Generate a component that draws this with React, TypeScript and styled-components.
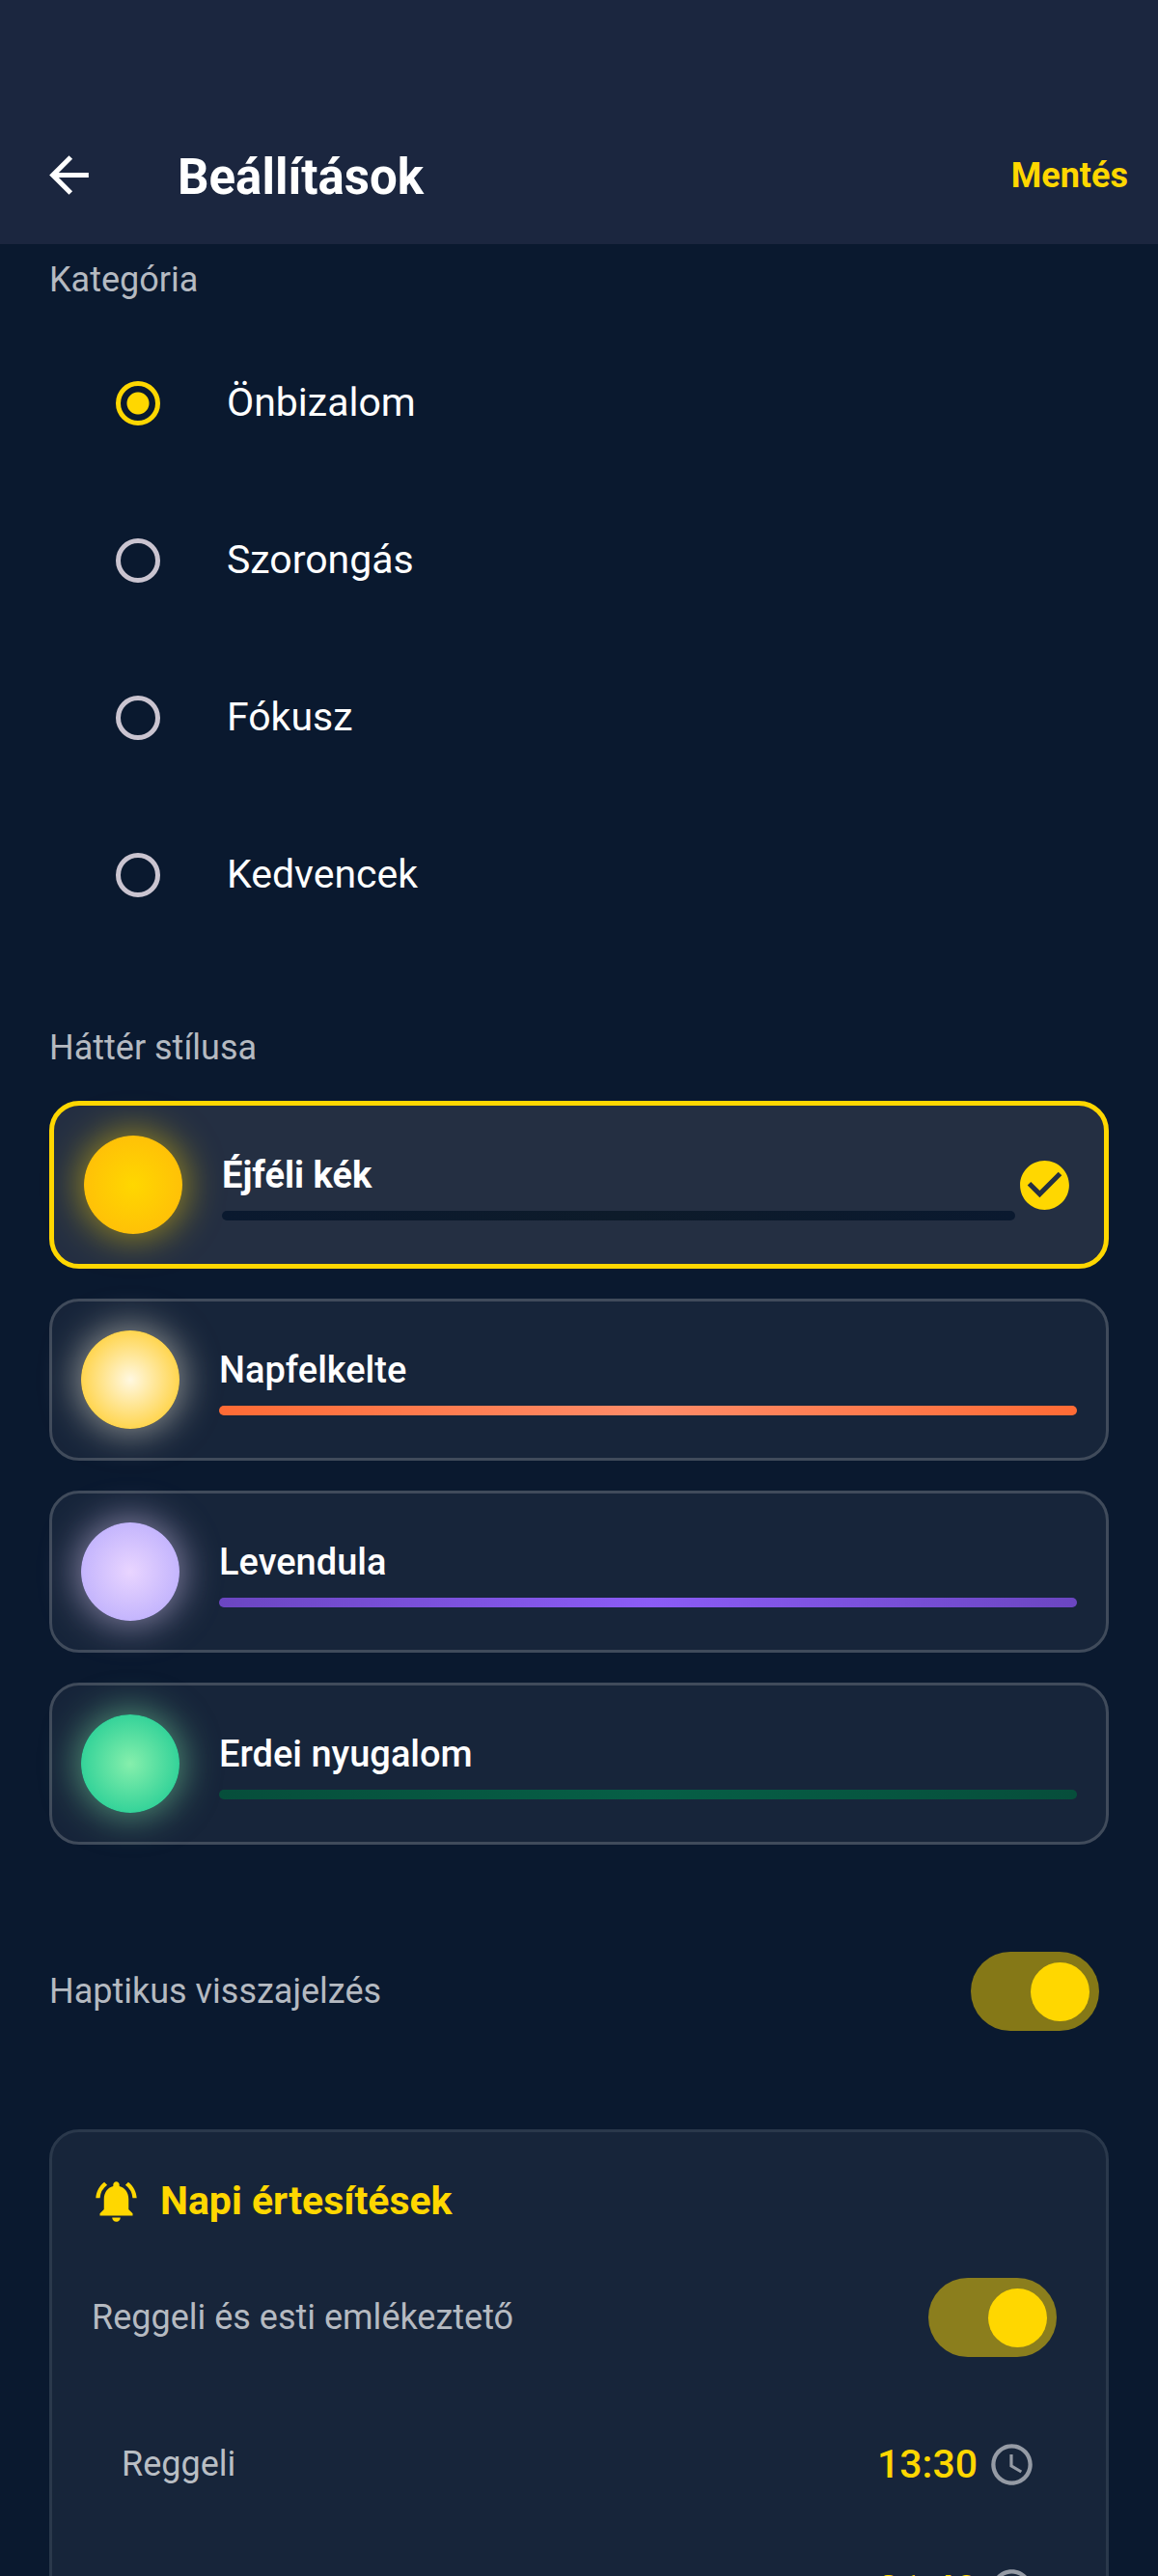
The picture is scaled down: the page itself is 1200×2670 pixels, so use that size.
import React, { useState } from "react";
import styled, { createGlobalStyle } from "styled-components";
import {
  MdArrowBack,
  MdCheckCircle,
  MdNotificationsActive,
  MdAccessTime,
} from "react-icons/md";

const gold = "#ffd700";

const GlobalStyle = createGlobalStyle`
  *, *::before, *::after { box-sizing: border-box; }
  body {
    margin: 0;
    background: #0a192f;
    color: #ffffff;
    font-family: Roboto, "Noto Sans", sans-serif;
  }
  button, input { font: inherit; }
`;

const Screen = styled.div`
  display: flex;
  flex-direction: column;
  height: 100vh;
  overflow: hidden;
`;

const AppBar = styled.header`
  display: flex;
  align-items: center;
  flex: none;
  gap: 82px;
  padding: 110px 31px 0 41px;
  height: 253px;
  background: #1b263f;
`;

const BackButton = styled.button`
  display: flex;
  padding: 0;
  border: 0;
  background: none;
  color: #ffffff;
  cursor: pointer;
`;

const Title = styled.h1`
  flex: 1;
  margin: 0;
  padding-top: 4px;
  font-size: 51px;
  line-height: 60px;
  font-weight: 700;
`;

const SaveButton = styled.button`
  padding: 0;
  border: 0;
  background: none;
  color: ${gold};
  font-size: 36px;
  line-height: 44px;
  font-weight: 700;
  cursor: pointer;
`;

const Content = styled.main`
  flex: 1;
  min-height: 0;
  overflow-y: auto;
  scrollbar-width: none;
  padding: 15px 51px 51px;
`;

const Group = styled.fieldset`
  display: flex;
  flex-direction: column;
  min-width: 0;
  margin: 0;
  padding: 0;
  border: 0;
`;

const Legend = styled.legend`
  padding: 0;
  color: #b5bac1;
  font-size: 36px;
  line-height: 44px;
`;

const Options = styled.div`
  padding: 24px 0 76px;
`;

const Option = styled.label`
  display: flex;
  align-items: center;
  gap: 69px;
  height: 163px;
  padding: 0 69px;
  font-size: 41px;
  line-height: 52px;
  cursor: pointer;
`;

const OptionText = styled.span`
  padding-bottom: 2px;
`;

const Radio = styled.input.attrs({ type: "radio" })`
  appearance: none;
  flex: none;
  width: 46px;
  height: 46px;
  margin: 0;
  border: 5px solid #cac4d0;
  border-radius: 50%;

  &:checked {
    border-color: ${gold};
    background: radial-gradient(circle, ${gold} 11px, transparent 12px);
  }
`;

const Cards = styled.div`
  display: flex;
  flex-direction: column;
  gap: 31px;
  padding-top: 33px;
`;

const Card = styled.label<{ $active: boolean }>`
  display: flex;
  align-items: center;
  padding: ${(p) => (p.$active ? "31px" : "30px")};
  border: ${(p) => (p.$active ? `5px solid ${gold}` : "3px solid #404b5b")};
  border-radius: 31px;
  background: ${(p) => (p.$active ? "#242f42" : "#17253a")};
  cursor: pointer;
`;

const HiddenRadio = styled.input.attrs({ type: "radio" })`
  appearance: none;
  position: absolute;
  width: 1px;
  height: 1px;
  margin: 0;
  opacity: 0;
`;

const Orb = styled.span<{ $inner: string; $outer: string }>`
  flex: none;
  width: 102px;
  height: 102px;
  margin-right: 41px;
  border-radius: 50%;
  background: radial-gradient(circle closest-side, ${(p) => p.$inner}, ${(p) => p.$outer});
  box-shadow: 0 0 36px 5px ${(p) => p.$inner}80;
`;

const CardBody = styled.span`
  display: flex;
  flex: 1;
  flex-direction: column;
  gap: 10px;
`;

const CardName = styled.span<{ $active: boolean }>`
  font-size: 38px;
  line-height: 54px;
  font-weight: ${(p) => (p.$active ? 700 : 500)};
`;

const Swatch = styled.span<{ $edge: string; $mid: string }>`
  height: 10px;
  border-radius: 5px;
  background: linear-gradient(90deg, ${(p) => `${p.$edge}, ${p.$mid}, ${p.$edge}`});
`;

const CheckMark = styled(MdCheckCircle)`
  flex: none;
  color: ${gold};
`;

const ToggleRow = styled.label`
  display: flex;
  align-items: center;
  justify-content: space-between;
  height: 122px;
  padding-right: 10px;
  color: #b5bac1;
  font-size: 36px;
  line-height: 44px;
  cursor: pointer;
`;

const HapticSection = styled.section`
  padding: 91px 0 82px;
`;

const Toggle = styled.input.attrs({ type: "checkbox", role: "switch" })`
  appearance: none;
  display: flex;
  align-items: center;
  flex: none;
  width: 133px;
  height: 82px;
  margin: 0;
  padding: 0 10px;
  border-radius: 41px;
  background: #ffffff33;
  cursor: pointer;

  &::before {
    content: "";
    width: 61px;
    height: 61px;
    border-radius: 50%;
    background: #cac4d0;
  }

  &:checked {
    justify-content: flex-end;
    background: ${gold}80;
  }

  &:checked::before {
    background: ${gold};
  }
`;

const Panel = styled.section`
  padding: 41px;
  border: 3px solid #2a384b;
  border-radius: 31px;
  background: #17253a;
`;

const PanelTitle = styled.h2`
  display: flex;
  align-items: center;
  gap: 20px;
  margin: 0;
  padding-bottom: 30px;
  color: ${gold};
  font-size: 41px;
  line-height: 60px;
  font-weight: 700;
`;

const TimeRow = styled.div`
  display: flex;
  align-items: center;
  justify-content: space-between;
  height: 130px;
  padding: 0 31px;
  color: #b9bec4;
  font-size: 36px;
  line-height: 44px;
`;

const TimeButton = styled.button`
  display: flex;
  align-items: center;
  gap: 10px;
  padding: 0;
  border: 0;
  background: none;
  color: ${gold};
  font-size: 41px;
  line-height: 52px;
  font-weight: 500;
  cursor: pointer;
`;

const ClockIcon = styled(MdAccessTime)`
  color: #959ba5;
`;

const Times = styled.div`
  padding-top: 26px;
`;

const categories = ["Önbizalom", "Szorongás", "Fókusz", "Kedvencek"];

const themes = [
  { name: "Éjféli kék", inner: "#ffd700", outer: "#ffc107", edge: "#0a192f", mid: "#0d1b2a" },
  { name: "Napfelkelte", inner: "#fff8e1", outer: "#ffd54f", edge: "#ff6b35", mid: "#ff8c69" },
  { name: "Levendula", inner: "#e9d5ff", outer: "#c4b5fd", edge: "#6b46c1", mid: "#8b5cf6" },
  { name: "Erdei nyugalom", inner: "#86efac", outer: "#34d399", edge: "#064e3b", mid: "#065f46" },
];

const reminders = [
  { label: "Reggeli", time: "13:30" },
  { label: "Esti", time: "21:40" },
];

export default function App() {
  const [category, setCategory] = useState(categories[0]);
  const [theme, setTheme] = useState(themes[0].name);
  const [haptic, setHaptic] = useState(true);
  const [daily, setDaily] = useState(true);

  return (
    <>
      <GlobalStyle />
      <Screen>
        <AppBar>
          <BackButton type="button" aria-label="Vissza">
            <MdArrowBack size={61} />
          </BackButton>
          <Title>Beállítások</Title>
          <SaveButton type="button">Mentés</SaveButton>
        </AppBar>

        <Content>
          <Group>
            <Legend>Kategória</Legend>
            <Options>
              {categories.map((name) => (
                <Option key={name}>
                  <Radio
                    name="category"
                    checked={category === name}
                    onChange={() => setCategory(name)}
                  />
                  <OptionText>{name}</OptionText>
                </Option>
              ))}
            </Options>
          </Group>

          <Group>
            <Legend>Háttér stílusa</Legend>
            <Cards>
              {themes.map((t) => {
                const active = t.name === theme;
                return (
                  <Card key={t.name} $active={active}>
                    <HiddenRadio
                      name="theme"
                      checked={active}
                      onChange={() => setTheme(t.name)}
                    />
                    <Orb $inner={t.inner} $outer={t.outer} />
                    <CardBody>
                      <CardName $active={active}>{t.name}</CardName>
                      <Swatch $edge={t.edge} $mid={t.mid} />
                    </CardBody>
                    {active && <CheckMark size={61} />}
                  </Card>
                );
              })}
            </Cards>
          </Group>

          <HapticSection>
            <ToggleRow>
              Haptikus visszajelzés
              <Toggle checked={haptic} onChange={(e) => setHaptic(e.target.checked)} />
            </ToggleRow>
          </HapticSection>

          <Panel>
            <PanelTitle>
              <MdNotificationsActive size={51} />
              Napi értesítések
            </PanelTitle>
            <ToggleRow>
              Reggeli és esti emlékeztető
              <Toggle checked={daily} onChange={(e) => setDaily(e.target.checked)} />
            </ToggleRow>
            <Times>
              {reminders.map((r) => (
                <TimeRow key={r.label}>
                  <span>{r.label}</span>
                  <TimeButton type="button">
                    {r.time}
                    <ClockIcon size={51} />
                  </TimeButton>
                </TimeRow>
              ))}
            </Times>
          </Panel>
        </Content>
      </Screen>
    </>
  );
}
